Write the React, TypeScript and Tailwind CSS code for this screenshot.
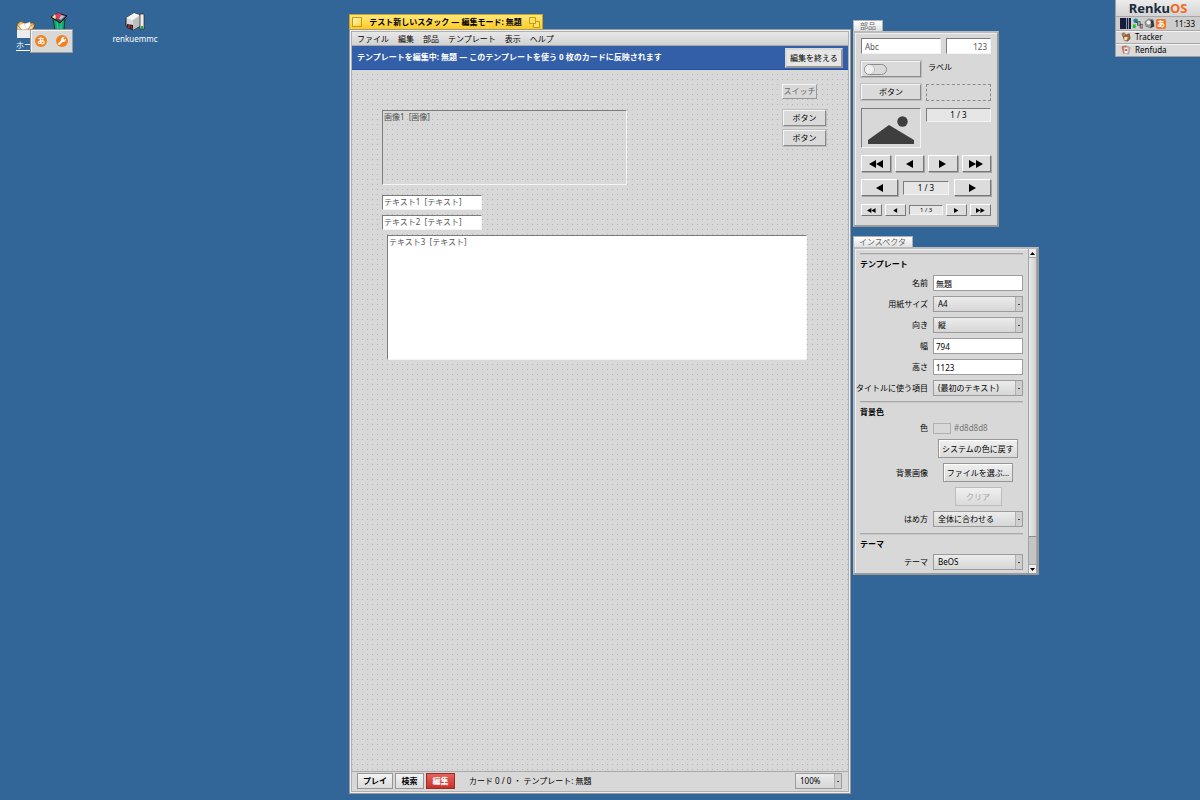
import React from 'react';
import clsx from 'clsx';

const MENU = ['ファイル', '編集', '部品', 'テンプレート', '表示', 'ヘルプ'];

const raised =
  'border border-t-[#f6f6f6] border-l-[#f6f6f6] border-r-[#8a8a8a] border-b-[#8a8a8a] bg-[#dadada] shadow-[0_0_0_1px_#bdbdbd]';
const sunken = 'border border-t-[#7c7c7c] border-l-[#7c7c7c] border-r-[#f4f4f4] border-b-[#f4f4f4]';

function Arrow({ dir, double, small }: { dir: 'left' | 'right'; double?: boolean; small?: boolean }) {
  return (
    <svg
      viewBox={double ? '0 0 14 8' : '0 0 7 8'}
      className={clsx(small ? 'h-[5px]' : 'h-[8px]', dir === 'left' && 'rotate-180')}
      fill="#000"
    >
      <path d="M0 0 7 4 0 8Z" />
      {double && <path d="M7 0 14 4 7 8Z" />}
    </svg>
  );
}

function NavButton({ dir, double, small, className }: { dir: 'left' | 'right'; double?: boolean; small?: boolean; className?: string }) {
  const label = dir === 'left' ? (double ? '最初' : '前') : double ? '最後' : '次';
  return (
    <button
      aria-label={label}
      className={clsx(
        'flex items-center justify-center border border-t-white border-l-white border-r-[#777] border-b-[#777] bg-[#dcdcdc]',
        small ? 'h-3' : 'h-[17px] shadow-[1px_1px_0_#a8a8a8]',
        className
      )}
    >
      <Arrow dir={dir} double={double} small={small} />
    </button>
  );
}

type SelectProps = { id: string; options: string[]; label?: string; className?: string };

function Select({ id, options, label, className }: SelectProps) {
  return (
    <div className={clsx('flex h-4 border border-[#9c9c9c] bg-linear-to-b from-[#ececec] to-[#d6d6d6]', className)}>
      <select id={id} aria-label={label} className="min-w-0 flex-1 appearance-none bg-transparent pl-1 leading-[12px] outline-none">
        {options.map((o) => (
          <option key={o}>{o}</option>
        ))}
      </select>
      <span className="pointer-events-none flex w-[7px] items-center justify-center border-l border-[#b0b0b0] bg-[#cfcfcf]">
        <span className="h-px w-[2px] bg-[#444]" />
      </span>
    </div>
  );
}

function Row({ id, label, children }: { id?: string; label?: string; children: React.ReactNode }) {
  return (
    <div className="flex items-center gap-[5px]">
      <label htmlFor={id} className="w-[72px] shrink-0 text-right leading-[12px] whitespace-nowrap">
        {label}
      </label>
      <div className="flex flex-1 justify-center">{children}</div>
    </div>
  );
}

function TextField({ id, value }: { id: string; value: string }) {
  return (
    <input
      id={id}
      defaultValue={value}
      className="h-4 w-full min-w-0 border border-[#9c9c9c] bg-white px-[2px] outline-none"
    />
  );
}

function PushButton({ children, className, disabled }: { children: React.ReactNode; className?: string; disabled?: boolean }) {
  return (
    <button
      disabled={disabled}
      className={clsx(
        'h-[19px] border bg-linear-to-b from-[#f0f0f0] to-[#dadada] whitespace-nowrap',
        disabled ? 'border-[#bcbcbc] text-[#a4a4a4]' : 'border-[#969696] shadow-[inset_1px_1px_0_#fff]',
        className
      )}
    >
      {children}
    </button>
  );
}

function Separator() {
  return <hr className="h-[2px] border-t border-b border-t-[#a8a8a8] border-b-[#c8c8c8]" />;
}

function FolderIcon() {
  return (
    <svg viewBox="0 0 20 19" className="h-[19px] w-5">
      <path d="M1 4 5 1 8 3 18 3 18 8 14 11 2 9Z" fill="#efb658" stroke="#6b3d10" strokeWidth=".7" />
      <path d="M3 5 8 3 13 9 5 10Z" fill="#fff" stroke="#aaa" strokeWidth=".4" />
      <path d="M8 4 14 2 15 7 11 9Z" fill="#fff" stroke="#aaa" strokeWidth=".4" />
      <path d="M1 5 6 10 1 10Z" fill="#f8d28c" stroke="#6b3d10" strokeWidth=".4" />
      <path d="M19 4 16 10 12 10 14 6Z" fill="#f8d28c" stroke="#6b3d10" strokeWidth=".4" />
      <path d="M1 10H14V18H1Z" fill="#ececec" />
    </svg>
  );
}

function TrashIcon() {
  return (
    <svg viewBox="0 0 18 18" className="h-[18px] w-[18px]">
      <path d="M3 7 15 7 14 18 5 18Z" fill="#15a272" stroke="#063d2b" />
      <path d="M7 9 8 18M11 9 11 18" stroke="#35d09a" />
      <path d="M1 5 8 1 17 4 10 11Z" fill="#4b4b4b" stroke="#111" />
      <path d="M2 5 5 2 7 5 5 7Z" fill="#f0e29a" />
      <circle cx="8.5" cy="4" r="3" fill="#de3c60" />
      <path d="M11 3 15 4 11 8 9 7Z" fill="#b9b6ce" />
    </svg>
  );
}

function DriveIcon() {
  return (
    <svg viewBox="0 0 20 20" className="h-5 w-5">
      <path d="M1 6 9 1 15 3 15 14 8 18 1 14Z" fill="#d9d9d9" stroke="#222" />
      <path d="M1 6 8 8 15 3 9 1Z" fill="#f4f4f4" />
      <path d="M8 8 15 4V14L8 18Z" fill="#bdbdbd" />
      <path d="M15 2H19V17H15Z" fill="#ececec" stroke="#222" strokeWidth=".7" />
      <path d="M16 14H18V17H16Z" fill="#1eb31e" />
      <path d="M2 12 8 13 8 18 2 16Z" fill="#222" />
      <path d="M3 13 5 16M5 13 3 16M6 14 7 17" stroke="#e02f2f" strokeWidth=".8" />
    </svg>
  );
}

function Desktop() {
  return (
    <>
      <div className="absolute top-5 left-4 flex flex-col items-start">
        <FolderIcon />
        <span className="leading-[12px] text-white underline underline-offset-2">ホー</span>
      </div>
      <div className="absolute top-3 left-[50px]">
        <TrashIcon />
      </div>
      <div className="absolute top-3 left-[111px] flex w-12 flex-col items-center">
        <DriveIcon />
        <span className="mt-px leading-[12px] text-white">renkuemmc</span>
      </div>
      <div className="absolute top-[29px] left-[30px] flex h-6 w-[43px] items-center justify-around border border-[#999] bg-[#d8d8d8] shadow-[inset_1px_1px_0_#f4f4f4]">
        <button className="flex h-3 w-3 items-center justify-center rounded-full bg-[#f5821f] font-bold text-white">
          あ
        </button>
        <button aria-label="設定" className="h-3 w-3">
          <svg viewBox="0 0 12 12">
            <circle cx="6" cy="6" r="6" fill="#f5821f" />
            <path d="M3 9 7 5" stroke="#fff" strokeWidth="1.8" strokeLinecap="round" />
            <path d="M9.6 3.4 8 5 7 4 8.6 2.4A2.4 2.4 0 1 0 9.6 3.4Z" fill="#fff" />
          </svg>
        </button>
      </div>
    </>
  );
}

function Deskbar() {
  return (
    <div className="absolute top-0 right-0 w-[85px] border-b border-l border-[#a0a0a0] bg-[#dadada]">
      <div className="flex h-4 items-center justify-center bg-linear-to-b from-[#ececec] to-[#d4d4d4] text-[13px] leading-[16px] font-bold text-[#1b2a3c]">
        Renku<span className="text-[#f36a21]">OS</span>
      </div>
      <div className="flex h-[14px] items-center gap-px border-t border-[#a8a8a8] bg-[#cdcdcd] pr-[5px] pl-1">
        <svg viewBox="0 0 11 11" className="h-[11px] w-[11px]">
          <path d="M0 0H11V11H0Z" fill="#8c8fa8" />
          <path d="M0 0H6V11H0ZM7 0H8V11H7ZM9 0H11V11H9Z" fill="#181b3c" />
        </svg>
        <svg viewBox="0 0 12 12" className="h-[11px] w-[11px]">
          <circle cx="4" cy="3" r="2.5" fill="#1a86a0" />
          <path d="M1 7H4V11H1Z" fill="#20c030" />
          <path d="M4 4 9 7" stroke="#111" strokeWidth=".7" />
          <path d="M6 4H9V8H6ZM9 7H12V11H9Z" fill="#aaa" stroke="#333" strokeWidth=".7" />
        </svg>
        <svg viewBox="0 0 12 12" className="h-[11px] w-[11px]">
          <path d="M1 4 5 1 10 2 11 9 7 11 2 9Z" fill="#999" stroke="#555" strokeWidth=".5" />
          <path d="M7 2 10 3 11 9 7 11 8 7Z" fill="#333" />
          <circle cx="5" cy="5" r="2.2" fill="#f0f0f0" />
        </svg>
        <span className="flex h-[10px] w-[10px] items-center justify-center rounded-xs bg-[#f5721f] leading-none font-bold text-white">
          あ
        </span>
        <span className="ml-auto">11:33</span>
      </div>
      <button className="flex h-[13px] w-full items-center gap-1 border-t border-[#a8a8a8] pl-[5px] text-left shadow-[inset_0_1px_0_#f4f4f4]">
        <svg viewBox="0 0 12 12" className="h-[10px] w-[10px]">
          <path d="M2 3 5 4 10 2 11 8 8 11 4 10Z" fill="#a96a35" stroke="#4a2a10" strokeWidth=".6" />
          <path d="M1 2 4 1 6 4 3 6Z" fill="#c98c52" stroke="#4a2a10" strokeWidth=".5" />
          <path d="M4 6 8 6 7 10 4 10Z" fill="#f0e4d4" />
        </svg>
        Tracker
      </button>
      <button className="flex h-[13px] w-full items-center gap-1 border-t border-[#a8a8a8] pl-[5px] text-left shadow-[inset_0_1px_0_#f4f4f4]">
        <svg viewBox="0 0 12 12" className="h-[10px] w-[10px]">
          <path d="M1 2 6 1 6 10 3 10Z" fill="#e9795a" stroke="#8f4a3a" strokeWidth=".5" />
          <path d="M6 1 11 3 9 11 5 10Z" fill="#c8b8b4" stroke="#777" strokeWidth=".5" />
          <path d="M4 3H8V10H4Z" fill="#fff" stroke="#aaa" strokeWidth=".5" />
          <circle cx="6" cy="6" r="1.2" fill="#d22" />
        </svg>
        Renfuda
      </button>
    </div>
  );
}

function PaletteWindow() {
  return (
    <section className="absolute top-5 left-[853px] w-[146px]">
      <h2 className="h-[11px] w-[30px] border border-b-0 border-[#b0b0b0] bg-linear-to-b from-white to-[#e0e0e0] pl-[6px] leading-[10px] text-[#666]">
        部品
      </h2>
      <div className="flex flex-col gap-[7px] border-2 border-t-[#bbb] border-l-[#bbb] border-r-[#999] border-b-[#999] bg-[#d8d8d8] px-[6px] pt-[5px] pb-[9px] shadow-[inset_1px_1px_0_#eee]">
        <div className="flex gap-[5px]">
          <input aria-label="テキスト" defaultValue="Abc" className={clsx(sunken, 'h-4 w-20 bg-white px-[3px] text-[#555] outline-none')} />
          <input aria-label="数値" defaultValue="123" className={clsx(sunken, 'h-4 min-w-0 flex-1 bg-white px-[3px] text-right text-[#555] outline-none')} />
        </div>
        <div className="flex gap-[7px]">
          <button aria-label="スイッチ" className={clsx(raised, 'flex h-4 w-[60px] items-center pl-[2px]')}>
            <span className="flex h-[11px] w-[23px] rounded-full border border-[#8c8c8c]">
              <span className="h-[9px] w-[9px] rounded-full bg-[#f0f0f0] shadow-[1px_0_0_#bbb]" />
            </span>
          </button>
          <span className="leading-[12px]">ラベル</span>
        </div>
        <div className="flex gap-[5px]">
          <button className={clsx(raised, 'h-4 w-[60px]')}>ボタン</button>
          <div className="h-[17px] flex-1 border border-dashed border-[#8c8c8c]" />
        </div>
        <div className="flex items-start gap-[5px]">
          <div className={clsx(sunken, 'flex h-10 w-[60px] items-end justify-center pb-[2px]')}>
            <svg viewBox="0 0 46 29" className="w-[46px]" fill="#3e3e3e">
              <path d="M0 24 21 9 46 24V28H0Z" />
              <circle cx="34.5" cy="5.5" r="5.2" />
            </svg>
          </div>
          <div className={clsx(sunken, 'h-[14px] flex-1 bg-[#e6e6e6] text-center leading-[12px]')}>1 / 3</div>
        </div>
        <div className="grid grid-cols-4 gap-[4px]">
          <NavButton dir="left" double />
          <NavButton dir="left" />
          <NavButton dir="right" />
          <NavButton dir="right" double />
        </div>
        <div className="flex items-center gap-[5px]">
          <NavButton dir="left" className="w-[37px]" />
          <div className={clsx(sunken, 'h-[14px] flex-1 bg-[#e6e6e6] text-center leading-[12px]')}>1 / 3</div>
          <NavButton dir="right" className="w-[37px]" />
        </div>
        <div className="flex items-center gap-[3px] pt-px">
          <NavButton dir="left" double small className="w-[21px]" />
          <NavButton dir="left" small className="w-[21px]" />
          <div className={clsx(sunken, 'h-[10px] flex-1 bg-[#e6e6e6] text-center text-[6px] leading-[8px]')}>1 / 3</div>
          <NavButton dir="right" small className="w-[21px]" />
          <NavButton dir="right" double small className="w-[21px]" />
        </div>
      </div>
    </section>
  );
}

function InspectorWindow() {
  return (
    <section className="absolute top-[236px] left-[853px] flex h-[339px] w-[186px] flex-col">
      <h2 className="h-[11px] w-[60px] border border-b-0 border-[#b0b0b0] bg-linear-to-b from-white to-[#e0e0e0] pl-[5px] leading-[9px] whitespace-nowrap text-[#666]">
        インスペクタ
      </h2>
      <div className="flex min-h-0 flex-1 border-2 border-t-[#bbb] border-l-[#bbb] border-r-[#999] border-b-[#999] bg-[#d8d8d8] shadow-[inset_1px_1px_0_#eee]">
        <div className="flex-1 overflow-hidden pt-1 pr-[5px] pl-[1px]">
          <div className="pl-1">
            <Separator />
            <h3 className="mt-[3px] mb-[5px] leading-[12px] font-bold">テンプレート</h3>
          </div>
          <div className="flex flex-col gap-[5px] pb-[5px]">
            <Row id="name" label="名前"><TextField id="name" value="無題" /></Row>
            <Row id="paper" label="用紙サイズ"><Select id="paper" options={['A4', 'A5', 'B5']} className="w-full" /></Row>
            <Row id="orient" label="向き"><Select id="orient" options={['縦', '横']} className="w-full" /></Row>
            <Row id="width" label="幅"><TextField id="width" value="794" /></Row>
            <Row id="height" label="高さ"><TextField id="height" value="1123" /></Row>
            <Row id="title" label="タイトルに使う項目"><Select id="title" options={['(最初のテキスト)']} className="w-full" /></Row>
          </div>
          <div className="pl-1">
            <Separator />
            <h3 className="mt-[3px] mb-[4px] leading-[12px] font-bold">背景色</h3>
          </div>
          <div className="flex flex-col gap-[5px] pb-[6px]">
            <Row id="color" label="色">
              <div className="flex w-full items-center gap-[3px] text-[#777]">
                <button id="color" className="h-[11px] w-[18px] border border-[#b0b0b0] bg-[#d8d8d8]" />
                #d8d8d8
              </div>
            </Row>
            <Row><PushButton className="w-20">システムの色に戻す</PushButton></Row>
            <Row label="背景画像"><PushButton className="w-[70px]">ファイルを選ぶ...</PushButton></Row>
            <Row><PushButton className="w-[47px]" disabled>クリア</PushButton></Row>
            <Row id="fit" label="はめ方"><Select id="fit" options={['全体に合わせる']} className="w-full" /></Row>
          </div>
          <div className="pl-1">
            <Separator />
            <h3 className="mt-[3px] mb-[4px] leading-[12px] font-bold">テーマ</h3>
          </div>
          <Row id="theme" label="テーマ"><Select id="theme" options={['BeOS']} className="w-full" /></Row>
        </div>
        <div className="flex w-[9px] flex-col border-x border-[#a4a4a4] bg-[#c4c4c4]">
          <button aria-label="上へ" className="flex h-[9px] items-center justify-center border-b border-[#a4a4a4] bg-[#eee]">
            <svg viewBox="0 0 5 3" className="w-[5px]"><path d="M0 3 2.5 0 5 3Z" /></svg>
          </button>
          <div className="h-[279px] border-b border-[#8c8c8c] bg-linear-to-r from-[#eaeaea] to-[#d0d0d0]" />
          <button aria-label="下へ" className="mt-auto flex h-[9px] items-center justify-center border-t border-[#a4a4a4] bg-[#eee]">
            <svg viewBox="0 0 5 3" className="w-[5px]"><path d="M0 0 2.5 3 5 0Z" /></svg>
          </button>
        </div>
      </div>
    </section>
  );
}

// Parts placed freely on the template, positions relative to the canvas
function Canvas() {
  return (
    <div className="relative flex-1 overflow-hidden bg-[#d8d8d8] bg-[radial-gradient(circle_at_center,#b4b4b4_0px,transparent_1px)] bg-size-[5px_5px] bg-position-[-2px_2px]">
      <div className="absolute top-[14px] left-[430px] h-[15px] w-[35px] border border-t-[#f4f4f4] border-l-[#f4f4f4] border-r-[#999] border-b-[#999] bg-[#d8d8d8] text-center leading-[12px] whitespace-nowrap text-[#666]">
        スイッチ
      </div>
      <button className={clsx(raised, 'absolute top-[40px] left-[431px] h-4 w-[43px]')}>ボタン</button>
      <button className={clsx(raised, 'absolute top-[60px] left-[431px] h-4 w-[43px]')}>ボタン</button>
      <div className={clsx(sunken, 'absolute top-[40px] left-[30px] h-[75px] w-[245px] pl-px leading-[12px] whitespace-pre text-[#555]')}>
        {'画像1  [画像]'}
      </div>
      <div className={clsx(sunken, 'absolute top-[125px] left-[30px] h-[15px] w-[100px] bg-white pl-px leading-[12px] whitespace-pre text-[#555]')}>
        {'テキスト1  [テキスト]'}
      </div>
      <div className={clsx(sunken, 'absolute top-[145px] left-[30px] h-[15px] w-[100px] bg-white pl-px leading-[12px] whitespace-pre text-[#555]')}>
        {'テキスト2  [テキスト]'}
      </div>
      <div className={clsx(sunken, 'absolute top-[165px] left-[35px] h-[125px] w-[420px] bg-white pl-px leading-[12px] whitespace-pre text-[#555]')}>
        {'テキスト3  [テキスト]'}
      </div>
    </div>
  );
}

function StackWindow() {
  return (
    <section className="absolute top-[14px] bottom-[6px] left-[349px] flex w-[502px] flex-col">
      <header className="flex h-[15px] w-[194px] items-center justify-between border border-b-0 border-[#c9a227] bg-linear-to-b from-[#ffe87a] to-[#ffcb0a] px-[2px]">
        <button aria-label="閉じる" className="h-[10px] w-[10px] border border-[#c99a10] bg-linear-to-br from-[#fff6c0] to-[#ffd01c]" />
        <h1 className="font-bold whitespace-nowrap">テスト新しいスタック — 編集モード: 無題</h1>
        <button aria-label="拡大" className="h-[11px] w-[11px]">
          <svg viewBox="0 0 11 11" fill="#ffe265" stroke="#c99a10">
            <path d="M4.5 4.5H10.5V10.5H4.5Z" />
            <path d="M.5 .5H6.5V6.5H.5Z" />
          </svg>
        </button>
      </header>
      <div className="flex min-h-0 flex-1 flex-col border border-[#999] bg-[#eee] p-px">
        <div className="flex min-h-0 flex-1 flex-col border border-[#b0b0b0]">
          <nav className="flex h-[14px] shrink-0 items-center gap-[9px] border-b border-[#a8a8a8] bg-linear-to-b from-[#e8e8e8] to-[#d2d2d2] px-[5px]">
            {MENU.map((item) => (
              <button key={item}>{item}</button>
            ))}
          </nav>
          <div className="flex h-[24px] shrink-0 items-center justify-between border-b border-[#2450a0] bg-[#335fa8] px-[5px]">
            <p className="pb-px font-bold text-white">
              テンプレートを編集中: 無題 — このテンプレートを使う 0 枚のカードに反映されます
            </p>
            <button className="h-5 w-[58px] border-2 border-t-[#d8d8d8] border-l-[#d8d8d8] border-r-[#969696] border-b-[#969696] bg-[#e6e6e6] whitespace-nowrap">
              編集を終える
            </button>
          </div>
          <Canvas />
          <footer className="flex h-5 shrink-0 items-center border-t border-[#a8a8a8] bg-[#d8d8d8] pr-[6px] pb-px pl-[5px]">
            <div className="flex gap-[2px]">
              <button className="h-4 w-9 border border-[#969696] bg-linear-to-b from-[#f4f4f4] to-[#dcdcdc] font-bold">プレイ</button>
              <button className="h-4 w-[29px] border border-[#969696] bg-linear-to-b from-[#f4f4f4] to-[#dcdcdc] font-bold">検索</button>
              <button className="h-4 w-[29px] border border-[#9c2a24] bg-linear-to-b from-[#e2645c] to-[#c9302a] font-bold text-white">編集</button>
            </div>
            <p className="ml-[14px] whitespace-pre">カード 0 / 0 ・ テンプレート: 無題</p>
            <Select id="zoom" label="表示倍率" options={['100%', '50%', '200%']} className="ml-auto w-[47px]" />
          </footer>
        </div>
      </div>
    </section>
  );
}

export default function App() {
  return (
    <main className="relative h-screen overflow-hidden bg-[#336698] font-['Noto_Sans','Noto_Sans_CJK_JP',sans-serif] text-[8px] leading-[12px] text-black">
      <Desktop />
      <StackWindow />
      <PaletteWindow />
      <InspectorWindow />
      <Deskbar />
    </main>
  );
}
